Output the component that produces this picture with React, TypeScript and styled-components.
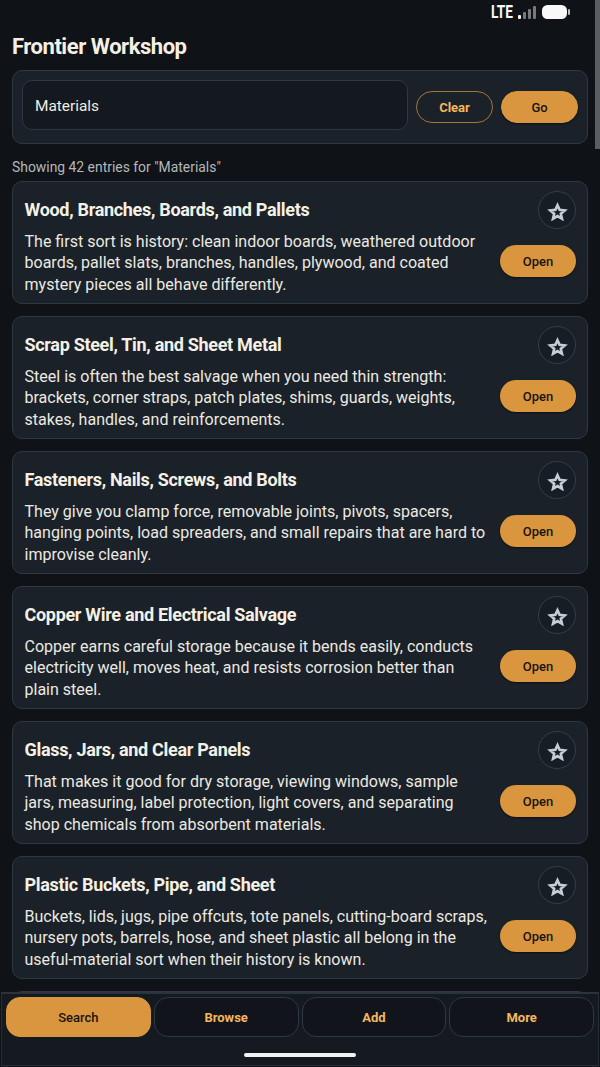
import React from "react";
import styled, { createGlobalStyle } from "styled-components";

const Global = createGlobalStyle`
  html, body { margin: 0; padding: 0; background: #0f1216; }
  * { box-sizing: border-box; }
`;

const Screen = styled.div`
  position: relative;
  width: 600px;
  height: 1067px;
  overflow: hidden;
  display: flex;
  flex-direction: column;
  background: #0f1216;
  font-family: Roboto, "Liberation Sans", sans-serif;
  color: #f5f0e6;
`;

const ScrollThumb = styled.div`
  position: absolute;
  top: 0;
  right: 0;
  width: 5px;
  height: 149px;
  background: #5a5d61;
`;

const StatusBar = styled.div`
  height: 24px;
  flex: none;
  display: flex;
  align-items: center;
  justify-content: flex-end;
  gap: 5px;
  padding-right: 30px;
`;

const Lte = styled.span`
  font-size: 18px;
  font-weight: 700;
  line-height: 18px;
  color: #f6f6f6;
  transform: scaleX(0.76);
  transform-origin: right center;
`;

const Main = styled.main`
  flex: 1;
  min-height: 0;
  overflow: hidden;
  padding: 11px 12px 0;
  display: flex;
  flex-direction: column;
`;

const Title = styled.h1`
  margin: 0;
  height: 24px;
  line-height: 24px;
  font-size: 22px;
  letter-spacing: -0.47px;
  font-weight: 700;
  color: #f5f0e6;
`;

const SearchCard = styled.section`
  flex: none;
  margin-top: 11px;
  height: 74px;
  display: flex;
  align-items: center;
  gap: 8px;
  padding: 0 9px;
  background: #1a2129;
  border: 1px solid #2e3842;
  border-radius: 10px;
`;

const SearchField = styled.div`
  flex: 1;
  height: 50px;
  margin-bottom: 4px;
  display: flex;
  align-items: center;
  padding: 2px 12px 0;
  font-size: 15.4px;
  color: #f0ece2;
  background: #14191f;
  border: 1px solid #2e3842;
  border-radius: 10px;
`;

const Pill = styled.button<{ $solid?: boolean }>`
  flex: none;
  width: 77px;
  height: 32px;
  padding: 0;
  border-radius: 16px;
  font-family: inherit;
  font-size: 13px;
  font-weight: ${(p) => (p.$solid ? 500 : 700)};
  color: ${(p) => (p.$solid ? "#1a1408" : "#f5b75a")};
  background: ${(p) => (p.$solid ? "#d9963e" : "transparent")};
  border: 1px solid ${(p) => (p.$solid ? "#d9963e" : "#a87434")};
  box-shadow: ${(p) => (p.$solid ? "0 1px 2px rgba(0, 0, 0, 0.5)" : "none")};
`;

const Summary = styled.p`
  flex: none;
  margin: 15px 0 0;
  height: 16px;
  line-height: 16px;
  font-size: 13.9px;
  color: #b4b8ba;
`;

const List = styled.div`
  margin-top: 6px;
  display: flex;
  flex-direction: column;
  gap: 12px;
`;

const Card = styled.article`
  flex: none;
  height: 123px;
  display: flex;
  gap: 12px;
  padding: 9px 11px 0 11.5px;
  background: #1a2129;
  border: 1px solid #2e3842;
  border-radius: 10px;
`;

const CardText = styled.div`
  flex: 1;
  min-width: 0;
`;

const CardTitle = styled.h2`
  margin: 8px 0 0;
  height: 22px;
  line-height: 22px;
  font-size: 18px;
  letter-spacing: -0.31px;
  font-weight: 700;
  color: #f5f0e6;
`;

const CardBody = styled.p`
  margin: 9.5px 0 0;
  font-size: 16.05px;
  line-height: 21.6px;
  color: #ece9e1;
`;

const CardActions = styled.div`
  flex: none;
  width: 76px;
  display: flex;
  flex-direction: column;
  align-items: flex-end;
  gap: 16px;
`;

const StarButton = styled.button`
  width: 38px;
  height: 38px;
  padding: 0;
  display: flex;
  align-items: center;
  justify-content: center;
  background: #171d24;
  border: 1px solid #333e49;
  border-radius: 50%;
`;

const OpenButton = styled.button`
  width: 76px;
  height: 32px;
  padding: 0;
  border: 0;
  border-radius: 16px;
  font-family: inherit;
  font-size: 13px;
  font-weight: 500;
  color: #1a1408;
  background: #d9963e;
  box-shadow: 0 1px 2px rgba(0, 0, 0, 0.55);
`;

const BottomNav = styled.nav`
  flex: none;
  height: 74px;
  margin: 0 1px 1px;
  padding: 3px 4px 0;
  background: #151a21;
  border: 1px solid #252d35;
  border-top: 2px solid #2b343d;
  display: flex;
  flex-direction: column;
  align-items: center;
`;

const Tabs = styled.div`
  align-self: stretch;
  display: grid;
  grid-template-columns: repeat(4, 1fr);
  gap: 3px;
`;

const Tab = styled.button<{ $active?: boolean }>`
  height: 40px;
  padding: 0;
  border-radius: 14px;
  font-family: inherit;
  font-size: 13px;
  font-weight: ${(p) => (p.$active ? 500 : 700)};
  color: ${(p) => (p.$active ? "#1a1408" : "#f5b75a")};
  background: ${(p) => (p.$active ? "#d9963e" : "#11151b")};
  border: 1px solid ${(p) => (p.$active ? "#d9963e" : "#2e3842")};
`;

const HomeBar = styled.div`
  width: 112px;
  height: 4px;
  margin-top: 16px;
  border-radius: 2px;
  background: #f2f2f2;
`;

const Star = () => (
  <svg width="21" height="21" viewBox="0 -1.6 24 24" fill="none" stroke="#c6ced3" strokeWidth="3" strokeLinejoin="miter">
    <path d="M12 4.4l2.4 5.3 5.8.6-4.4 3.8 1.3 5.7-5.1-3-5.1 3 1.3-5.7-4.4-3.8 5.8-.6z" />
  </svg>
);

const Signal = () => (
  <svg width="19" height="13" viewBox="0 0 19 13">
    <rect x="0" y="9" width="3" height="4" rx="1" fill="#f2f2f2" />
    <rect x="5" y="6" width="3" height="7" rx="1" fill="#77797c" />
    <rect x="10" y="3" width="3" height="10" rx="1" fill="#77797c" />
    <rect x="15" y="0" width="3" height="13" rx="1" fill="#77797c" />
  </svg>
);

const Battery = () => (
  <svg width="28" height="14" viewBox="0 0 28 14">
    <rect x="0" y="0" width="25" height="14" rx="5.5" fill="#f8f8f8" />
    <rect x="26" y="4" width="2" height="6" rx="1" fill="#bdbdbd" />
  </svg>
);

const entries = [
  ["Wood, Branches, Boards, and Pallets", "The first sort is history: clean indoor boards, weathered outdoor boards, pallet slats, branches, handles, plywood, and coated mystery pieces all behave differently."],
  ["Scrap Steel, Tin, and Sheet Metal", "Steel is often the best salvage when you need thin strength: brackets, corner straps, patch plates, shims, guards, weights, stakes, handles, and reinforcements."],
  ["Fasteners, Nails, Screws, and Bolts", "They give you clamp force, removable joints, pivots, spacers, hanging points, load spreaders, and small repairs that are hard to improvise cleanly."],
  ["Copper Wire and Electrical Salvage", "Copper earns careful storage because it bends easily, conducts electricity well, moves heat, and resists corrosion better than plain steel."],
  ["Glass, Jars, and Clear Panels", "That makes it good for dry storage, viewing windows, sample jars, measuring, label protection, light covers, and separating shop chemicals from absorbent materials."],
  ["Plastic Buckets, Pipe, and Sheet", "Buckets, lids, jugs, pipe offcuts, tote panels, cutting-board scraps, nursery pots, barrels, hose, and sheet plastic all belong in the useful-material sort when their history is known."],
];

export default function App() {
  return (
    <Screen>
      <Global />
      <ScrollThumb />
      <StatusBar>
        <Lte>LTE</Lte>
        <Signal />
        <Battery />
      </StatusBar>
      <Main>
        <Title>Frontier Workshop</Title>
        <SearchCard>
          <SearchField>Materials</SearchField>
          <Pill>Clear</Pill>
          <Pill $solid>Go</Pill>
        </SearchCard>
        <Summary>Showing 42 entries for "Materials"</Summary>
        <List>
          {entries.map(([title, body]) => (
            <Card key={title}>
              <CardText>
                <CardTitle>{title}</CardTitle>
                <CardBody>{body}</CardBody>
              </CardText>
              <CardActions>
                <StarButton aria-label="Favourite">
                  <Star />
                </StarButton>
                <OpenButton>Open</OpenButton>
              </CardActions>
            </Card>
          ))}
          <Card aria-hidden="true" />
        </List>
      </Main>
      <BottomNav>
        <Tabs>
          <Tab $active>Search</Tab>
          <Tab>Browse</Tab>
          <Tab>Add</Tab>
          <Tab>More</Tab>
        </Tabs>
        <HomeBar />
      </BottomNav>
    </Screen>
  );
}
